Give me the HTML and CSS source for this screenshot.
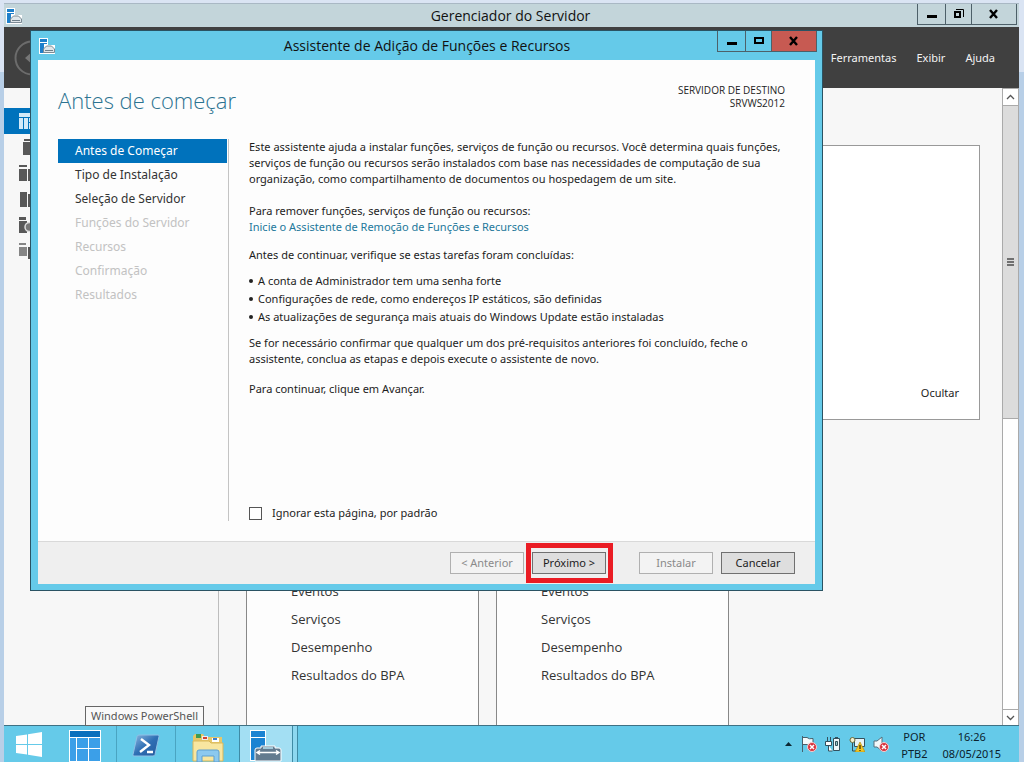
FILE: index.html
```html
<!DOCTYPE html>
<html lang="pt-BR">
<head>
<meta charset="utf-8">
<title>Gerenciador do Servidor</title>
<link rel="stylesheet" href="styles.css">
</head>
<body>
<svg width="0" height="0" class="defs" aria-hidden="true">
  <symbol id="server" viewBox="0 0 16 16">
    <path d="M0 0h9v7h7v9H0z" fill="#fff"/>
    <path d="M1 1h7v3H1zM1 5h7v1H5v9H1z" fill="#1e7fcb"/>
    <path d="M4.500 14.500V11l3-3h5l3 3v3.500z" fill="#dfe6ea" stroke="#7b8a94"/>
    <path d="M6 12.500h8" stroke="#6e7f8a"/>
  </symbol>
  <symbol id="badge" viewBox="0 0 10 10">
    <circle cx="5" cy="5" r="4.500" fill="#d8323c" stroke="#f6d0d0"/>
    <path d="M3 3l4 4M7 3L3 7" stroke="#fff" stroke-width="1.500"/>
  </symbol>
</svg>
<div class="desktop">
  <section class="manager">
    <header class="titlebar">
      <svg class="app-icon" width="16" height="16"><use href="#server"/></svg>
      <h1 class="window-title">Gerenciador do Servidor</h1>
      <div class="window-buttons">
        <button class="wb" aria-label="Minimizar"><svg width="12" height="12"><path d="M1 7h10v3H1z"/></svg></button>
        <button class="wb mid" aria-label="Restaurar"><svg width="12" height="12"><path d="M2 4h5v5H2z" fill="none" stroke="#000" stroke-width="2"/><path d="M3 1.500h7.500V9" fill="none" stroke="#000"/></svg></button>
        <button class="wb wide" aria-label="Fechar"><svg width="12" height="12"><path d="M2 2l7 8M9 2l-7 8" stroke="#000" stroke-width="2.400"/></svg></button>
      </div>
    </header>
    <div class="banner">
      <button class="back" aria-label="Voltar"><svg width="36" height="36"><circle cx="18" cy="18" r="16.500" fill="none" stroke="#6c6c6c" stroke-width="2"/><path d="M11 18l8-7v5h10v4H19v5z" fill="#777"/></svg></button>
      <nav class="menu">
        <button>Ferramentas</button><button>Exibir</button><button>Ajuda</button>
      </nav>
    </div>
    <div class="workspace">
      <aside class="sidebar">
        <span class="side-item active"><svg width="16" height="16" fill="#d3e9f8"><path d="M0 0h16v4H0zM0 5h4v11H0zM5 5h4v11H5zM10 5h6v4h-6zM10 10h6v6h-6z"/></svg></span>
        <span class="side-item"><svg width="16" height="16" fill="#585858"><path d="M5 0h9v2H5zM4 3h10v13H4z"/></svg></span>
        <span class="side-item"><svg width="16" height="16" fill="#585858"><path d="M0 0h8v2H0zM0 4h8v12H0zM9 4h6v12H9z"/></svg></span>
        <span class="side-item"><svg width="16" height="16" fill="#585858"><path d="M1 1h7v15H1zM9 3h6v13H9z"/></svg></span>
        <span class="side-item"><svg width="16" height="16" fill="#585858"><path d="M0 0h7v3H0zM0 4h8v12H0z"/><circle cx="10.500" cy="10" r="4.500" fill="#777" stroke="#ddd" stroke-width="1.500"/></svg></span>
        <span class="side-item"><svg width="16" height="16" fill="#858585"><path d="M0 0h7v2H0zM0 4h8v9H0z"/><path d="M9 4h6v12H9z" fill="#555"/></svg></span>
      </aside>
      <main class="content">
        <section class="welcome"><button class="hide">Ocultar</button></section>
        <div class="tiles">
          <ul class="tile"><li>Eventos</li><li>Serviços</li><li>Desempenho</li><li>Resultados do BPA</li></ul>
          <ul class="tile"><li>Eventos</li><li>Serviços</li><li>Desempenho</li><li>Resultados do BPA</li></ul>
        </div>
      </main>
      <div class="scrollbar">
        <button aria-label="Rolar para cima"><svg width="9" height="6"><path d="M1 5l3.500-3.500L8 5" fill="none" stroke="#555" stroke-width="1.300"/></svg></button>
        <div class="track"><div class="thumb"><i></i><i></i><i></i></div></div>
        <button class="down" aria-label="Rolar para baixo"><svg width="9" height="6"><path d="M1 1l3.500 3.500L8 1" fill="none" stroke="#555" stroke-width="1.300"/></svg></button>
      </div>
    </div>
  </section>

  <footer class="taskbar">
    <button class="task start" aria-label="Iniciar"><svg width="28" height="26" fill="#fff"><path d="M1 4l11-1.600V12H1zM13 2.200L27 0v12H13zM1 13h11v9.600L1 21zM13 13h14v12l-14-2.200z"/></svg></button>
    <button class="task panel" aria-label="Painel"><svg width="32" height="32"><path d="M0 0h32v32H0z" fill="#fff"/><path d="M1 1h30v6H1z" fill="#0a6fbd"/><path d="M1 8h6v23H1zM8 8h11v10H8zM20 8h11v10H20zM8 19h11v12H8zM20 19h11v12H20z" fill="#3b9fe8"/></svg></button>
    <div class="task-slot">
      <button class="task line" aria-label="Windows PowerShell"><svg width="28" height="24"><defs><linearGradient id="ps" x1="0" y1="0" x2="1" y2="1"><stop offset="0" stop-color="#8cb8e0"/><stop offset=".5" stop-color="#2f6fb4"/><stop offset="1" stop-color="#245a9c"/></linearGradient></defs><path d="M7 1h19q1.500 0 1 1.500l-4 18q-.5 1.500-2 1.500H2q-1.500 0-1-1.500l4-18Q5.500 1 7 1z" fill="url(#ps)" stroke="#8fc0e6"/><path d="M9 5l8 6-9 7M15 18h6" fill="none" stroke="#fff" stroke-width="2.400"/></svg></button>
      <span class="tooltip" role="tooltip">Windows PowerShell</span>
    </div>
    <button class="task line folder" aria-label="Explorador de Arquivos"><svg width="32" height="30"><path d="M1 3l2-2h8l2 3h17v23H1z" fill="#e7c769"/><path d="M4 1h5v4H4z" fill="#3f9b52"/><path d="M10 3h6v4h-6z" fill="#e9eef2"/><path d="M11 4h4v2h-4z" fill="#d3442f"/><path d="M20 5h7v4h-7z" fill="#fff"/><path d="M21 5h4v2h-4z" fill="#3d7fd0"/><path d="M1 8h16l2 2h12v18H1z" fill="#f8e6a0" stroke="#d8b75a"/><path d="M5 29V19q0-2 2-2h18q2 0 2 2v10h-5v-6H10v6z" fill="#8cc9ef" stroke="#5c9fd0"/></svg></button>
    <button class="task running" aria-label="Gerenciador do Servidor"><svg width="32" height="32"><path d="M0 0h16v31H0z" fill="#fff"/><path d="M1 1h14v6H1zM1 8h14v22H1z" fill="#1b83d2"/><path d="M5 31V20q0-2 2-2h4v-2h14v2h4q2 0 2 2v11z" fill="#637b8f" stroke="#fff"/><path d="M13 18h10" stroke="#b9e4f3" stroke-width="1.500"/><path d="M8 22.500h20M10 20.500l-3 2 3 2M26 20.500l3 2-3 2" stroke="#fff" fill="none" stroke-width="1.500"/></svg></button>
    <div class="tray">
      <svg width="9" height="16"><path d="M1 10l3.500-4L8 10z" fill="#0c2733"/></svg>
      <svg width="16" height="16"><path d="M1.500 0v16M2 1.500h4q2 2 6 1v7q-4 1-6-1H2" fill="#f5fafc" stroke="#47606c"/><use href="#badge" x="6" y="6" width="10" height="10"/></svg>
      <svg width="16" height="16"><path d="M8.500 2.500h6v12h-6z" fill="#eef7fb" stroke="#33505d"/><path d="M10 1h3v2h-3z" fill="#33505d"/><path d="M10.500 5.500h2v4h-2z" fill="#9cc" stroke="#33505d"/><path d="M2.500 1v4M5.500 1v4M.5 5.500h6v4h-6zM3.500 9v6h4" fill="#fff" stroke="#33505d"/></svg>
      <svg width="16" height="16"><path d="M5.500 2.500h10v8h-10z" fill="#e9f4f8" stroke="#33505d"/><circle cx="3.500" cy="4" r="2.500" fill="#f5f1d0" stroke="#686838"/><path d="M3.500 7v8H7" fill="none" stroke="#33505d"/><path d="M11 6l5 10H6z" fill="#f3c623" stroke="#b98b12" stroke-width=".7"/><path d="M11 9v4M11 14v1" stroke="#000"/></svg>
      <svg width="16" height="16"><path d="M1 5h3l5-4v14l-5-4H1z" fill="#f3f8fa" stroke="#58717d"/><use href="#badge" x="6" y="6" width="10" height="10"/></svg>
      <div class="tray-text lang">POR<br>PTB2</div>
      <div class="tray-text clock">16:26<br>08/05/2015</div>
    </div>
  </footer>

  <section class="wizard" role="dialog" aria-labelledby="wizard-title">
    <header class="wizard-bar">
      <svg class="app-icon" width="16" height="16"><use href="#server"/></svg>
      <h2 class="window-title" id="wizard-title">Assistente de Adição de Funções e Recursos</h2>
      <div class="window-buttons">
        <button class="wb" aria-label="Minimizar"><svg width="12" height="12"><path d="M1 7h10v3H1z"/></svg></button>
        <button class="wb mid" aria-label="Maximizar"><svg width="12" height="12"><path d="M2 3h8v5H2z" fill="none" stroke="#000" stroke-width="2"/></svg></button>
        <button class="wb wide close" aria-label="Fechar"><svg width="12" height="12"><path d="M2 2l7 8M9 2l-7 8" stroke="#000" stroke-width="2.400"/></svg></button>
      </div>
    </header>
    <div class="wizard-body">
      <div class="wizard-head">
        <h3>Antes de começar</h3>
        <p class="target">SERVIDOR DE DESTINO<br>SRVWS2012</p>
      </div>
      <div class="wizard-main">
        <nav class="steps">
          <button class="current">Antes de Começar</button>
          <button>Tipo de Instalação</button>
          <button>Seleção de Servidor</button>
          <button disabled>Funções do Servidor</button>
          <button disabled>Recursos</button>
          <button disabled>Confirmação</button>
          <button disabled>Resultados</button>
        </nav>
        <div class="text">
          <p>Este assistente ajuda a instalar funções, serviços de função ou recursos. Você determina quais funções,<br>serviços de função ou recursos serão instalados com base nas necessidades de computação de sua<br>organização, como compartilhamento de documentos ou hospedagem de um site.</p>
          <p>Para remover funções, serviços de função ou recursos:<br><a href="#">Inicie o Assistente de Remoção de Funções e Recursos</a></p>
          <p>Antes de continuar, verifique se estas tarefas foram concluídas:</p>
          <ul>
            <li>A conta de Administrador tem uma senha forte</li>
            <li>Configurações de rede, como endereços IP estáticos, são definidas</li>
            <li>As atualizações de segurança mais atuais do Windows Update estão instaladas</li>
          </ul>
          <p>Se for necessário confirmar que qualquer um dos pré-requisitos anteriores foi concluído, feche o<br>assistente, conclua as etapas e depois execute o assistente de novo.</p>
          <p>Para continuar, clique em Avançar.</p>
          <label class="skip"><input type="checkbox">Ignorar esta página, por padrão</label>
        </div>
      </div>
      <div class="actions">
        <button disabled>&lt; Anterior</button>
        <span class="marked"><button>Próximo &gt;</button></span>
        <button class="install" disabled>Instalar</button>
        <button>Cancelar</button>
      </div>
    </div>
  </section>
</div>
</body>
</html>
```
FILE: styles.css
```css
* { box-sizing: border-box; }
body { margin: 0; font: 11px/16px "Noto Sans", "Open Sans", sans-serif; color: #1c1c1c; }
h1, h2, h3, p, ul { margin: 0; padding: 0; font-weight: 400; }
ul { list-style: none; }
button { font: inherit; color: inherit; border: 0; padding: 0; background: none; }
svg { display: block; flex: none; }
.defs { position: absolute; }

.desktop {
  position: relative;
  display: flex;
  flex-direction: column;
  height: 100vh;
  min-height: 620px;
  padding: 3px 5px 0 4px;
  overflow: hidden;
  background: linear-gradient(#dae4f3 72px, #b8cfe7 72px);
}
.manager { flex: 1; min-height: 0; display: flex; flex-direction: column; }
.titlebar, .wizard-bar { display: flex; align-items: center; }
.titlebar { height: 24px; padding-left: 2px; background: #c3d5da; border-top: 1px solid #a9b8c4; }
.window-title { flex: 1; padding-left: 82px; text-align: center; font: 14px/20px "Open Sans", "Noto Sans", sans-serif; color: #111; }
.window-buttons { display: flex; align-self: flex-start; border: 1px solid #4d6069; border-top: 0; }
.titlebar .window-buttons { margin-right: 2px; }
.wb { display: flex; align-items: center; justify-content: center; width: 27px; height: 20px; }
.wb + .wb { border-left: 1px solid #4d6069; }
.wb.mid { width: 26px; }
.wb.wide { width: 45px; }
.wb.close { background: #c75a52; }

.banner { display: flex; align-items: center; justify-content: space-between; height: 61px; padding: 0 24px 0 10px; background: #404040; color: #f4f4f4; }
.menu { display: flex; gap: 20px; }

.workspace { flex: 1; min-height: 0; display: flex; background: #f7f7f7; }
.sidebar { width: 215px; padding-top: 20px; border-right: 1px solid #bdbdbd; }
.side-item { display: flex; align-items: center; height: 26px; padding-left: 15px; }
.side-item.active { background: #0072bc; }
.content { flex: 1; display: flex; flex-direction: column; gap: 20px; padding: 57px 22px 0 27px; }
.welcome { display: flex; align-items: flex-end; justify-content: flex-end; height: 275px; flex: none; padding: 0 20px 18px; background: #fff; border: 1px solid #999; }
.tiles { flex: 1; display: flex; gap: 17px; }
.tile { width: 233px; padding: 136px 44px 0; background: #fdfdfd; border: 1px solid #888; border-bottom: 0; font: 13px/28px "Open Sans", "Noto Sans", sans-serif; color: #333; white-space: nowrap; }
.scrollbar { width: 17px; display: flex; flex-direction: column; background: #fff; border: 1px solid #aaa; border-width: 1px 1px 0; }
.scrollbar button { display: flex; align-items: center; justify-content: center; height: 16px; }
.scrollbar .down { border-top: 1px solid #aaa; }
.track { flex: 1; }
.thumb { height: 52%; display: flex; flex-direction: column; align-items: center; justify-content: center; gap: 1px; background: #dcdcdc; border: 1px solid #aaa; border-width: 1px 0; }
.thumb i { width: 7px; height: 2px; background: #707070; }

.taskbar { display: flex; height: 37px; background: #65cae9; border-top: 1px solid #3f7184; }
.task { display: flex; justify-content: center; align-items: flex-start; width: 59px; height: 36px; padding-top: 4px; }
.task.start { width: 50px; padding-top: 6px; }
.task.panel { width: 62px; }
.task.line { border-left: 1px solid #4aa4c1; }
.task-slot { position: relative; }
.task-slot .task { padding-top: 8px; }
.task.folder { width: 64px; padding-top: 7px; }
.task.running { width: 59px; justify-content: flex-start; padding-left: 10px; background: linear-gradient(90deg, #a3dff3 52px, #3f8ba5 52px, #3f8ba5 53px, #8dd8f0 53px, #8dd8f0 57px, #3f8ba5 57px); border-left: 1px solid #3f8ba5; }
.tooltip { position: absolute; left: -31px; bottom: 36px; padding: 1px 5px; color: #555; background: #f9f9f9; border: 1px solid #666; white-space: nowrap; }
.tray { display: flex; align-items: center; gap: 8px; margin-left: auto; padding-right: 18px; color: #0b222d; }
.tray-text { text-align: center; line-height: 17px; padding-top: 2px; }
.lang { margin-left: 4px; }
.clock { margin-left: 7px; }

.wizard { position: absolute; top: 30px; left: 30px; right: 201px; padding: 0 7px 6px; background: #65cae9; border: 1px solid #2a5363; }
.wizard-bar { height: 29px; }
.wizard-bar .app-icon { margin-left: 1px; }
.wizard-bar .window-buttons { margin-right: -2px; }
.wizard-body { display: flex; flex-direction: column; background: #fdfdfd; }
.wizard-head { display: flex; justify-content: space-between; padding: 24px 30px 0 20px; height: 79px; }
.wizard-head h3 { font: 300 22px/32px "Open Sans", "Noto Sans", sans-serif; color: #2c7391; }
.target { text-align: right; font: 10px/13px "Open Sans", "Noto Sans", sans-serif; }
.wizard-main { display: flex; padding: 0 20px; margin-bottom: 20px; }
.steps { flex: none; display: flex; flex-direction: column; width: 171px; border-right: 1px solid #c4c4c4; }
.steps button { height: 24px; margin-right: 1px; padding-left: 17px; text-align: left; font-size: 12px; color: #333; }
.steps .current { color: #fff; background: #0072bc; }
.steps button:disabled { color: #c2c2c2; }
.text { flex: 1; display: flex; flex-direction: column; padding-left: 20px; min-height: 382px; white-space: nowrap; }
.text p { margin-bottom: 12px; }
.text p:first-child { margin-bottom: 16px; }
.text ul { margin: -3px 0 9px; line-height: 18px; }
.text ul + p { margin-bottom: 14px; }
.text li { display: flex; align-items: center; gap: 5px; }
.text li::before { content: ""; width: 4px; height: 4px; border-radius: 2px; background: #222; }
.text a { color: #23789b; text-decoration: none; }
.skip { display: flex; align-items: center; gap: 10px; margin-top: auto; }
.skip input { appearance: none; width: 13px; height: 13px; margin: 0; border: 1px solid #555; background: #fff; }
.actions { display: flex; align-items: center; justify-content: flex-end; gap: 8px; height: 43px; padding-right: 20px; background: #efefef; border-top: 1px solid #d9d9d9; }
.actions button { width: 74px; height: 22px; line-height: 20px; background: #dedede; border: 1px solid #707070; }
.actions button:disabled { color: #8a8a8a; background: #f3f3f3; border-color: #b0b0b0; }
.actions .install { margin-left: 25px; }
.marked { position: relative; }
.marked::after { content: ""; position: absolute; inset: -9px -7px -9px -6px; border: 5px solid #ea1c24; }
```
